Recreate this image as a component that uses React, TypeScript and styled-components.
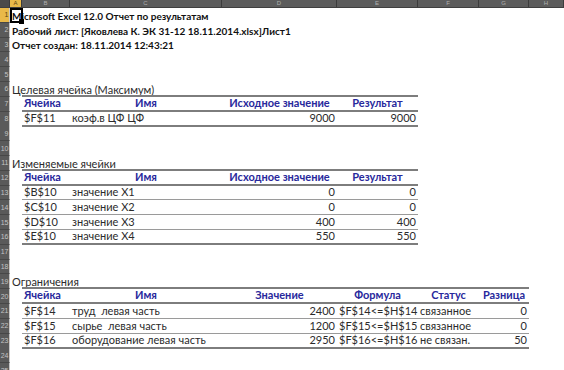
import styled, { createGlobalStyle } from 'styled-components'

const GlobalStyle = createGlobalStyle`
  html, body {
    margin: 0;
    padding: 0;
    background: #ffffff;
  }
  body {
    font-family: Lato, 'Liberation Sans', sans-serif;
    overflow: hidden;
  }
`

const ROW_HEIGHT = 14.8
const COLUMNS = ['A', 'B', 'C', 'D', 'E', 'F', 'G', 'H']
const GRID = '10px 12px 48px 152px 115px 81px 61px 50px 1fr'

type Kind = 'title' | 'label' | 'head' | 'body'
type Align = 'left' | 'right' | 'center'
type Rule = 'thick' | 'thin'

type CellSpec = {
  text?: string
  kind?: Kind
  align?: Align
}

type RowSpec = {
  cells: (CellSpec | null)[]
  rule?: Rule
  ruleTo?: number
}

const Sheet = styled.div`
  position: relative;
  width: 564px;
  height: 370px;
  overflow: hidden;
  background: #ffffff;
`

const HeaderBar = styled.div`
  display: grid;
  grid-template-columns: ${GRID};
  height: 7px;
  background: #5c5c5c;
  border-bottom: 1px solid #3f3f3f;
`

const Corner = styled.div`
  background: #4a4a4a;
  border-right: 1px solid #3a3a3a;
`

const ColumnHeader = styled.div<{ $active?: boolean }>`
  display: flex;
  align-items: center;
  justify-content: center;
  overflow: hidden;
  background: ${(p) => (p.$active ? '#e9b949' : 'transparent')};
  border-right: 1px solid #3c3c3c;
  color: ${(p) => (p.$active ? '#5a4310' : '#b0b0b0')};
  font-family: 'Liberation Sans', sans-serif;
  font-size: 6px;
  line-height: 7px;
`

const SheetRow = styled.div`
  display: grid;
  grid-template-columns: ${GRID};
  height: ${ROW_HEIGHT}px;
`

const RowNumber = styled.div<{ $active?: boolean }>`
  display: flex;
  align-items: center;
  justify-content: flex-end;
  overflow: hidden;
  background: ${(p) => (p.$active ? '#e9b949' : '#5a5a5a')};
  border-right: 1px solid #c8c8c8;
  border-bottom: 1px solid #474747;
  box-sizing: border-box;
  color: ${(p) => (p.$active ? '#5a4310' : '#c4c4c4')};
  font-family: 'Liberation Sans', sans-serif;
  font-size: 7px;
  letter-spacing: -0.3px;
  padding-right: 1px;
  white-space: nowrap;
`

const Cell = styled.div<{ $kind: Kind; $align: Align; $rule?: Rule }>`
  display: flex;
  align-items: flex-end;
  justify-content: ${(p) =>
    p.$align === 'right' ? 'flex-end' : p.$align === 'center' ? 'center' : 'flex-start'};
  box-sizing: border-box;
  min-width: 0;
  padding: 0 2px 1px;
  border-bottom: ${(p) =>
    p.$rule === 'thick'
      ? '2px solid #7d7d7d'
      : p.$rule === 'thin'
        ? '1px solid #9a9a9a'
        : 'none'};
  white-space: pre;
  font-size: ${(p) => (p.$kind === 'title' ? 10 : 11)}px;
  line-height: 12px;
  font-weight: ${(p) => (p.$kind === 'title' || p.$kind === 'head' ? 700 : 400)};
  color: ${(p) =>
    p.$kind === 'head' ? '#28289c' : p.$kind === 'title' ? '#111111' : '#2b2b2b'};
`

const Selection = styled.div`
  position: absolute;
  left: 10px;
  top: 8px;
  width: 13px;
  height: 15px;
  box-sizing: border-box;
  border: 2px solid #000000;
  pointer-events: none;

  &::after {
    content: '';
    position: absolute;
    right: -3px;
    bottom: -3px;
    width: 5px;
    height: 5px;
    background: #000000;
  }
`

const t = (text: string): CellSpec => ({ text, kind: 'body', align: 'left' })
const n = (text: string): CellSpec => ({ text, kind: 'body', align: 'right' })
const h = (text: string, align: Align = 'center'): CellSpec => ({ text, kind: 'head', align })
const title = (text: string): CellSpec => ({ text, kind: 'title', align: 'left' })
const label = (text: string): CellSpec => ({ text, kind: 'label', align: 'left' })

const empty: RowSpec = { cells: [] }

const rows: RowSpec[] = [
  { cells: [title('Microsoft Excel 12.0 Отчет по результатам')] },
  { cells: [title('Рабочий лист: [Яковлева К. ЭК 31-12 18.11.2014.xlsx]Лист1')] },
  { cells: [title('Отчет создан: 18.11.2014 12:43:21')] },
  empty,
  empty,
  { cells: [label('Целевая ячейка (Максимум)')], rule: 'thick', ruleTo: 4 },
  {
    cells: [null, h('Ячейка', 'left'), h('Имя'), h('Исходное значение'), h('Результат')],
    rule: 'thick',
    ruleTo: 4,
  },
  { cells: [null, t('$F$11'), t('коэф.в ЦФ ЦФ'), n('9000'), n('9000')], rule: 'thick', ruleTo: 4 },
  empty,
  empty,
  { cells: [label('Изменяемые ячейки')], rule: 'thick', ruleTo: 4 },
  {
    cells: [null, h('Ячейка', 'left'), h('Имя'), h('Исходное значение'), h('Результат')],
    rule: 'thick',
    ruleTo: 4,
  },
  { cells: [null, t('$B$10'), t('значение X1'), n('0'), n('0')], rule: 'thin', ruleTo: 4 },
  { cells: [null, t('$C$10'), t('значение X2'), n('0'), n('0')], rule: 'thin', ruleTo: 4 },
  { cells: [null, t('$D$10'), t('значение X3'), n('400'), n('400')], rule: 'thin', ruleTo: 4 },
  { cells: [null, t('$E$10'), t('значение X4'), n('550'), n('550')], rule: 'thick', ruleTo: 4 },
  empty,
  empty,
  { cells: [label('Ограничения')], rule: 'thick', ruleTo: 6 },
  {
    cells: [
      null,
      h('Ячейка', 'left'),
      h('Имя'),
      h('Значение'),
      h('Формула'),
      h('Статус'),
      h('Разница'),
    ],
    rule: 'thick',
    ruleTo: 6,
  },
  {
    cells: [null, t('$F$14'), t('труд  левая часть'), n('2400'), t('$F$14<=$H$14'), t('связанное'), n('0')],
    rule: 'thin',
    ruleTo: 6,
  },
  {
    cells: [null, t('$F$15'), t('сырье  левая часть'), n('1200'), t('$F$15<=$H$15'), t('связанное'), n('0')],
    rule: 'thin',
    ruleTo: 6,
  },
  {
    cells: [
      null,
      t('$F$16'),
      t('оборудование левая часть'),
      n('2950'),
      t('$F$16<=$H$16'),
      t('не связан.'),
      n('50'),
    ],
    rule: 'thick',
    ruleTo: 6,
  },
  empty,
  empty,
]

export default function App() {
  return (
    <>
      <GlobalStyle />
      <Sheet>
        <HeaderBar>
          <Corner />
          {COLUMNS.map((col, i) => (
            <ColumnHeader key={col} $active={i === 0}>
              {col}
            </ColumnHeader>
          ))}
        </HeaderBar>
        {rows.map((row, r) => (
          <SheetRow key={r}>
            <RowNumber $active={r === 0}>{r + 1}</RowNumber>
            {COLUMNS.map((col, c) => {
              const spec = row.cells[c]
              const ruled = row.rule && c >= 1 && c <= (row.ruleTo ?? 0)
              return (
                <Cell
                  key={col}
                  $kind={spec?.kind ?? 'body'}
                  $align={spec?.align ?? 'left'}
                  $rule={ruled ? row.rule : undefined}
                >
                  {spec?.text}
                </Cell>
              )
            })}
          </SheetRow>
        ))}
        <Selection />
      </Sheet>
    </>
  )
}
